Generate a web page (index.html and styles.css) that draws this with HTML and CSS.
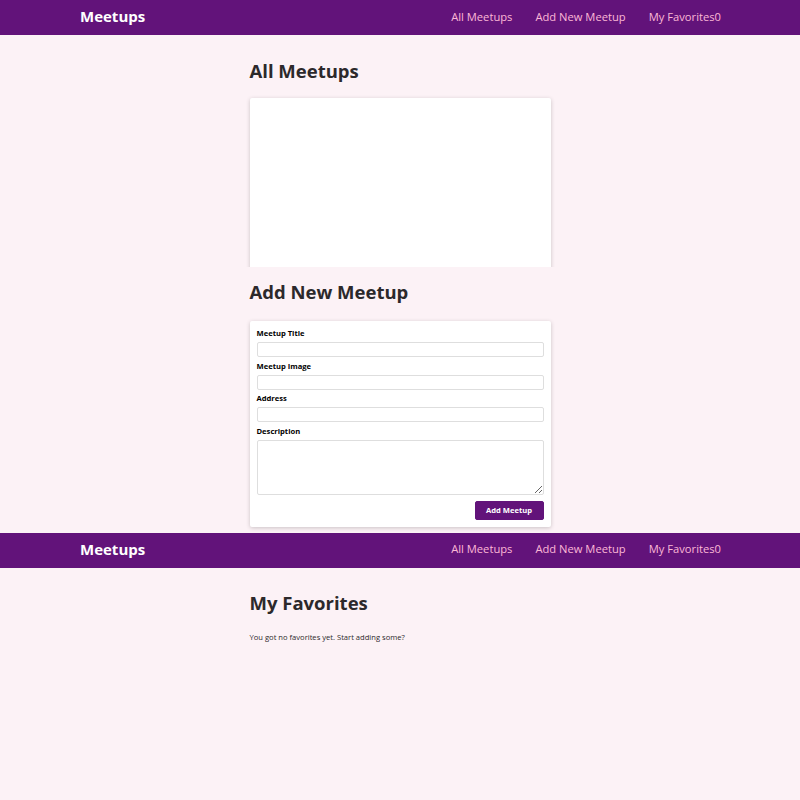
FILE: index.html
```html
<!DOCTYPE html>
<html lang="en">
<head>
<meta charset="utf-8">
<title>Meetups</title>
<link rel="stylesheet" href="styles.css">
</head>
<body>
<header class="bar">
  <div class="logo">Meetups</div>
  <nav class="nav">
    <a href="#">All Meetups</a>
    <a href="#">Add New Meetup</a>
    <a href="#">My Favorites<span class="badge">0</span></a>
  </nav>
</header>
<main class="content">
  <h1 class="title first">All Meetups</h1>
  <div class="clip">
    <div class="card list-card"></div>
  </div>
  <h1 class="title second">Add New Meetup</h1>
  <form class="card form-card">
    <div class="control">
      <label for="t">Meetup Title</label>
      <input id="t" type="text">
    </div>
    <div class="control">
      <label for="i">Meetup Image</label>
      <input id="i" type="url">
    </div>
    <div class="control">
      <label for="a">Address</label>
      <input id="a" type="text">
    </div>
    <div class="control">
      <label for="d">Description</label>
      <textarea id="d"></textarea>
    </div>
    <div class="actions">
      <button type="button">Add Meetup</button>
    </div>
  </form>
</main>
<header class="bar second-bar">
  <div class="logo">Meetups</div>
  <nav class="nav">
    <a href="#">All Meetups</a>
    <a href="#">Add New Meetup</a>
    <a href="#">My Favorites<span class="badge">0</span></a>
  </nav>
</header>
<main class="content">
  <h1 class="title third">My Favorites</h1>
  <p class="empty">You got no favorites yet. Start adding some?</p>
</main>
</body>
</html>
```
FILE: styles.css
```css
* { box-sizing: border-box; }
html, body { margin: 0; padding: 0; }
body {
  background: #fcf2f6;
  font-family: "Open Sans", "Noto Sans", sans-serif;
  color: #2c292b;
  min-height: 800px;
}
.bar {
  height: 35px;
  background: #62137a;
  display: flex;
  align-items: center;
  justify-content: space-between;
  padding: 0 79px 3px 80px;
}
.second-bar { margin-top: 6px; }
.logo {
  color: #ffffff;
  font-weight: 700;
  font-size: 15px;
}
.nav {
  display: flex;
  gap: 23px;
}
.nav a {
  color: #fcb8d6;
  text-decoration: none;
  font-size: 11.2px;
}
.content {
  width: 301px;
  margin: 0 auto;
}
.title {
  font-size: 18.5px;
  font-weight: 700;
  line-height: 27px;
  margin: 0;
}
.first { padding-top: 22px; }
.second { margin-top: 11px; }
.third { padding-top: 21.5px; }
.clip {
  height: 173px;
  overflow: hidden;
  padding: 4px 4px 0;
  margin: 10px -4px 0;
}
.card {
  background: #fff;
  border-radius: 2px;
  box-shadow: 0 1px 4px rgba(0,0,0,0.2);
}
.list-card {
  height: 200px;
}
.form-card {
  margin-top: 16px;
  padding: 6px 7px 7px;
}
.control {
  display: flex;
  flex-direction: column;
  margin-bottom: 2.5px;
}
.control label {
  font-size: 7.6px;
  font-weight: 700;
  line-height: 12px;
  margin-bottom: 3px;
  color: #000;
}
.control input,
.control textarea {
  font: inherit;
  font-size: 7.6px;
  border: 1px solid #dedede;
  border-radius: 2px;
  background: #fff;
  padding: 1px;
  width: 100%;
}
.control input { height: 15px; }
.control textarea { height: 55px; resize: vertical; }
.actions {
  display: flex;
  justify-content: flex-end;
  margin-top: 6px;
}
.actions button {
  font: inherit;
  font-size: 7.6px;
  font-weight: 700;
  color: #fff;
  background: #62137a;
  border: 1px solid #62137a;
  border-radius: 2px;
  width: 69px;
  height: 19px;
  padding: 0;
}
.empty {
  font-size: 7.6px;
  line-height: 10px;
  margin: 15.5px 0 0;
}
```
